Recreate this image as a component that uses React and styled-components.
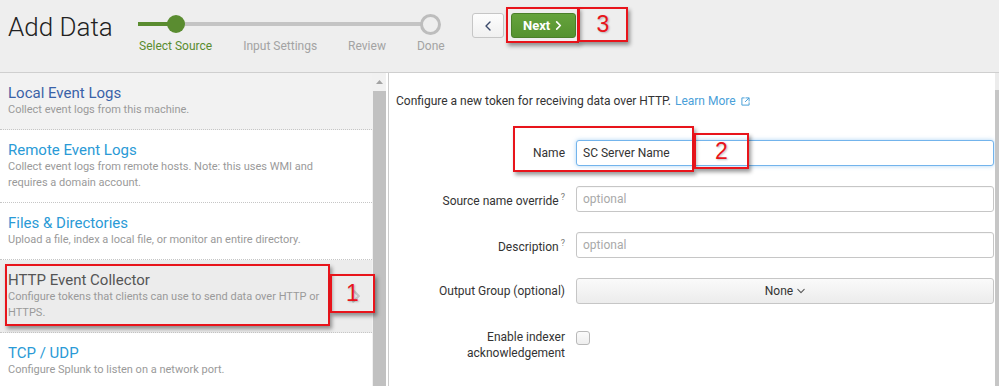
import React from "react";
import styled, { createGlobalStyle } from "styled-components";

const GlobalStyle = createGlobalStyle`
  html, body {
    margin: 0;
    padding: 0;
    background: #fff;
  }
  body {
    font-family: Roboto, "Liberation Sans", Arial, sans-serif;
  }
  * {
    box-sizing: border-box;
  }
`;

const Page = styled.div`
  position: relative;
  width: 999px;
  height: 386px;
  overflow: hidden;
  background: #eeeeee;
  color: #333;
`;

/* ---------- header ---------- */

const Header = styled.header`
  display: flex;
  align-items: flex-start;
  height: 72px;
  padding-left: 8px;
`;

const Title = styled.h1`
  margin: 13px 0 0;
  width: 131px;
  font-size: 26px;
  font-weight: 300;
  line-height: 28px;
  color: #222;
  white-space: nowrap;
`;

const Steps = styled.ol`
  position: relative;
  display: flex;
  gap: 31px;
  margin: 12px 0 0;
  padding: 0;
  list-style: none;
`;

const Track = styled.div`
  position: absolute;
  top: 10px;
  left: -1px;
  right: 15px;
  height: 4px;
  background: #c4c4c4;
`;

const Progress = styled.div`
  position: absolute;
  top: 10px;
  left: -1px;
  width: 38px;
  height: 4px;
  background: #5a8c30;
`;

const Step = styled.li`
  position: relative;
  display: flex;
  flex-direction: column;
  align-items: center;
`;

const Marker = styled.div`
  display: flex;
  align-items: center;
  justify-content: center;
  height: 24px;
`;

const Dot = styled.span`
  display: block;
  width: ${(p) => (p.$done ? 18 : 21)}px;
  height: ${(p) => (p.$done ? 18 : 21)}px;
  border-radius: 50%;
  background: ${(p) => (p.$done ? "#5a8c30" : "#eeeeee")};
  border: ${(p) => (p.$done ? "none" : "3px solid #bdbdbd")};
`;

const StepLabel = styled.span`
  margin-top: 2px;
  font-size: 12px;
  line-height: 16px;
  white-space: nowrap;
  color: ${(p) => (p.$active ? "#5a8c30" : "#a3a3a3")};
`;

const NavButtons = styled.div`
  display: flex;
  gap: 7px;
  margin: 13px 0 0 27px;
`;

const BackButton = styled.button`
  display: flex;
  align-items: center;
  justify-content: center;
  width: 32px;
  height: 25px;
  padding: 0;
  border: 1px solid #c6c6c6;
  border-radius: 3px;
  background: linear-gradient(#fdfdfd, #f0f0f0);
`;

const NextButton = styled.button`
  display: flex;
  align-items: center;
  justify-content: center;
  gap: 4px;
  width: 65px;
  height: 25px;
  padding: 0;
  border: 1px solid #4b7f2a;
  border-radius: 3px;
  background: linear-gradient(#65a33c, #55922f);
  color: #fff;
  font-family: Roboto, sans-serif;
  font-size: 13px;
  font-weight: 700;
`;

/* ---------- body ---------- */

const Body = styled.div`
  display: flex;
  height: 314px;
  border-top: 1px solid #cfcfcf;
  background: #fff;
`;

const SourcePane = styled.div`
  display: flex;
  width: 389px;
  padding-right: 2px;
  border-right: 1px solid #cccccc;
`;

const SourceList = styled.ul`
  width: 372px;
  margin: 0;
  padding: 0;
  list-style: none;
`;

const SourceItem = styled.li`
  display: flex;
  align-items: center;
  gap: 12px;
  padding: 11px ${(p) => (p.$selected ? 9 : 24)}px 11px 8px;
  border-bottom: 1px dotted #c6c6c6;
  background: ${(p) => (p.$selected ? "#ececec" : p.$hover ? "#f2f2f2" : "#fff")};
`;

const SourceText = styled.div`
  flex: 1;
`;

const SourceTitle = styled.div`
  font-size: 15px;
  line-height: 18px;
  color: ${(p) => p.$color};
`;

const SourceDesc = styled.div`
  font-size: 11px;
  line-height: 16px;
  color: #9a9a9a;
`;

const Scrollbar = styled.div`
  display: flex;
  flex-direction: column;
  width: 14px;
  background: #f1f1f1;
`;

const ScrollArrow = styled.div`
  display: flex;
  align-items: center;
  justify-content: center;
  height: 18px;
`;

const ScrollThumb = styled.div`
  flex: 1;
  margin: 0 0 0 1px;
  background: #c1c1c1;
`;

const FormPane = styled.div`
  flex: 1;
  padding: 20px 1px 0 7px;
`;

const Intro = styled.p`
  display: flex;
  align-items: center;
  margin: 0;
  font-size: 12px;
  line-height: 16px;
  color: #333;
`;

const Link = styled.a`
  display: inline-flex;
  align-items: center;
  gap: 5px;
  margin-left: 4px;
  color: #4aa0d9;
  text-decoration: none;
`;

const Form = styled.form`
  margin-top: 31px;
`;

const Row = styled.div`
  display: grid;
  grid-template-columns: 169px 1fr;
  column-gap: 11px;
  align-items: ${(p) => (p.$top ? "start" : "center")};
  margin-bottom: 20px;
  padding-top: ${(p) => (p.$top ? 5 : 0)}px;
`;

const Label = styled.label`
  font-size: 12px;
  line-height: 16px;
  text-align: right;
  color: #333;
`;

const Hint = styled.sup`
  margin-left: 2px;
  font-size: 9px;
  color: #7a7a7a;
`;

const TextInput = styled.input`
  width: 100%;
  height: 26px;
  padding: 0 6px;
  border: 1px solid ${(p) => (p.$focused ? "#73b4ec" : "#c6c6c6")};
  border-radius: 3px;
  box-shadow: ${(p) => (p.$focused ? "0 0 4px rgba(102,175,233,.55)" : "inset 0 1px 1px rgba(0,0,0,.03)")};
  font-family: Roboto, sans-serif;
  font-size: 12px;
  color: #333;
  outline: none;
  &::placeholder {
    color: #a9a9a9;
  }
`;

const SelectButton = styled.button`
  display: flex;
  align-items: center;
  justify-content: center;
  gap: 4px;
  width: 100%;
  height: 26px;
  border: 1px solid #c6c6c6;
  border-radius: 3px;
  background: linear-gradient(#fafafa, #ececec);
  font-family: Roboto, sans-serif;
  font-size: 12px;
  color: #333;
`;

const Checkbox = styled.span`
  display: block;
  width: 14px;
  height: 14px;
  margin-top: 2px;
  border: 1px solid #b9b9b9;
  border-radius: 3px;
  background: linear-gradient(#fbfbfb, #eeeeee);
`;

const EdgeScroll = styled.div`
  width: 4px;
  background: linear-gradient(#ececec 0, #ececec 17px, #c6c6c6 17px);
`;

/* ---------- red annotations ---------- */

const Callout = styled.div`
  position: absolute;
  left: ${(p) => p.$x}px;
  top: ${(p) => p.$y}px;
  width: ${(p) => p.$w}px;
  height: ${(p) => p.$h}px;
  display: flex;
  align-items: center;
  justify-content: center;
  border: 2px solid #e8141b;
  box-shadow: 2px 3px 4px rgba(0, 0, 0, 0.4);
  color: #e8141b;
  font-family: "Liberation Sans", Arial, sans-serif;
  font-size: 23px;
  text-shadow: 1px 1px 2px rgba(0, 0, 0, 0.25);
  pointer-events: none;
`;

const Chevron = ({ dir = "right", color = "#333", size = 9, width = 1.6 }) => {
  const d = {
    right: "M3 1 L7 5 L3 9",
    left: "M7 1 L3 5 L7 9",
    down: "M1 3 L5 7 L9 3",
  }[dir];
  return (
    <svg width={size} height={size} viewBox="0 0 10 10">
      <path d={d} fill="none" stroke={color} strokeWidth={width} strokeLinecap="round" strokeLinejoin="round" />
    </svg>
  );
};

const ExternalIcon = () => (
  <svg width="9" height="9" viewBox="0 0 10 10">
    <path d="M4 1 H1 V9 H9 V6" fill="none" stroke="#4aa0d9" strokeWidth="1.1" />
    <path d="M5 1 H9 V5 M9 1 L4.5 5.5" fill="none" stroke="#4aa0d9" strokeWidth="1.1" />
  </svg>
);

const steps = [
  { label: "Select Source", active: true, dot: "done" },
  { label: "Input Settings" },
  { label: "Review" },
  { label: "Done", dot: "open" },
];

const sources = [
  { title: "Local Event Logs", desc: "Collect event logs from this machine.", color: "#3a62a8", hover: true },
  {
    title: "Remote Event Logs",
    desc: "Collect event logs from remote hosts. Note: this uses WMI and requires a domain account.",
    color: "#2a9ad6",
  },
  {
    title: "Files & Directories",
    desc: "Upload a file, index a local file, or monitor an entire directory.",
    color: "#2a9ad6",
  },
  {
    title: "HTTP Event Collector",
    desc: "Configure tokens that clients can use to send data over HTTP or HTTPS.",
    color: "#555",
    selected: true,
  },
  { title: "TCP / UDP", desc: "Configure Splunk to listen on a network port.", color: "#2a9ad6" },
];

export default function App() {
  return (
    <Page>
      <GlobalStyle />
      <Header>
        <Title>Add Data</Title>
        <Steps>
          <Track />
          <Progress />
          {steps.map((s) => (
            <Step key={s.label}>
              <Marker>{s.dot && <Dot $done={s.dot === "done"} />}</Marker>
              <StepLabel $active={s.active}>{s.label}</StepLabel>
            </Step>
          ))}
        </Steps>
        <NavButtons>
          <BackButton type="button" aria-label="Back">
            <Chevron dir="left" color="#3b4a6b" size={10} width={1.4} />
          </BackButton>
          <NextButton type="button">
            Next
            <Chevron dir="right" color="#fff" size={9} width={1.8} />
          </NextButton>
        </NavButtons>
      </Header>

      <Body>
        <SourcePane>
          <SourceList>
            {sources.map((s) => (
              <SourceItem key={s.title} $selected={s.selected} $hover={s.hover}>
                <SourceText>
                  <SourceTitle $color={s.color}>{s.title}</SourceTitle>
                  <SourceDesc>{s.desc}</SourceDesc>
                </SourceText>
                {s.selected && <Chevron dir="right" color="#c4c4c4" size={14} width={1.6} />}
              </SourceItem>
            ))}
          </SourceList>
          <Scrollbar>
            <ScrollArrow>
              <svg width="7" height="4" viewBox="0 0 7 4">
                <path d="M0 4 L3.5 0 L7 4 Z" fill="#a3a3a3" />
              </svg>
            </ScrollArrow>
            <ScrollThumb />
          </Scrollbar>
        </SourcePane>

        <FormPane>
          <Intro>
            Configure a new token for receiving data over HTTP.
            <Link href="#">
              Learn More <ExternalIcon />
            </Link>
          </Intro>
          <Form>
            <Row>
              <Label>Name</Label>
              <TextInput $focused defaultValue="SC Server Name" />
            </Row>
            <Row>
              <Label>
                Source name override<Hint>?</Hint>
              </Label>
              <TextInput placeholder="optional" />
            </Row>
            <Row>
              <Label>
                Description<Hint>?</Hint>
              </Label>
              <TextInput placeholder="optional" />
            </Row>
            <Row>
              <Label>Output Group (optional)</Label>
              <SelectButton type="button">
                None <Chevron dir="down" color="#555" size={8} width={1.3} />
              </SelectButton>
            </Row>
            <Row $top>
              <Label>
                Enable indexer
                <br />
                acknowledgement
              </Label>
              <Checkbox role="checkbox" aria-checked="false" />
            </Row>
          </Form>
        </FormPane>
        <EdgeScroll />
      </Body>

      <Callout $x={506} $y={7} $w={73} $h={36} />
      <Callout $x={578} $y={7} $w={50} $h={35}>3</Callout>
      <Callout $x={513} $y={126} $w={181} $h={46} />
      <Callout $x={694} $y={133} $w={55} $h={36}>2</Callout>
      <Callout $x={5} $y={264} $w={325} $h={62} />
      <Callout $x={330} $y={274} $w={45} $h={39}>1</Callout>
    </Page>
  );
}
